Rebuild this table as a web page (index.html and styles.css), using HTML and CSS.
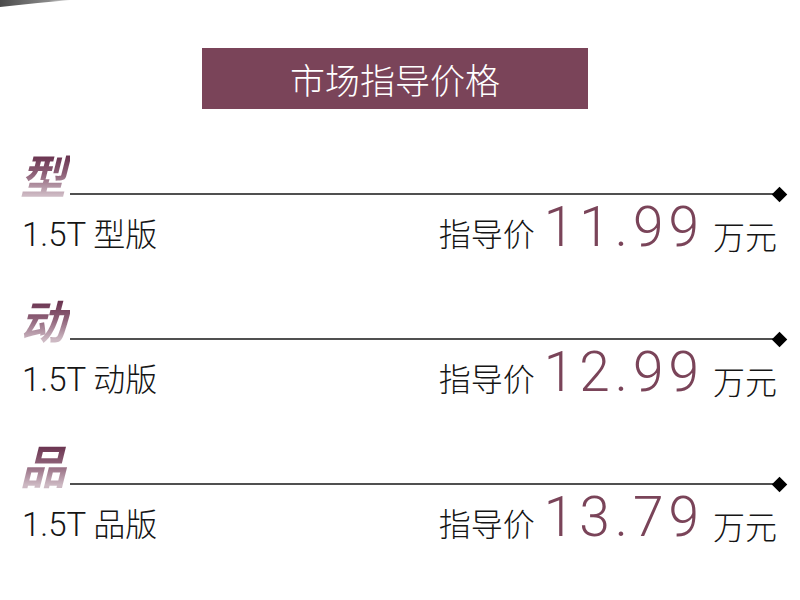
FILE: index.html
```html
<!DOCTYPE html>
<html lang="zh">
<head>
<meta charset="utf-8">
<link rel="stylesheet" href="styles.css">
</head>
<body>
<svg class="corner" width="80" height="10" viewBox="0 0 80 10">
  <defs>
    <linearGradient id="cg" x1="0" y1="0" x2="1" y2="0">
      <stop offset="0" stop-color="#4a4a4a"/>
      <stop offset="0.7" stop-color="#8a8a8a"/>
      <stop offset="1" stop-color="#e0e0e0"/>
    </linearGradient>
  </defs>
  <path d="M0 0 L70 0 Q35 3 0 7 Z" fill="url(#cg)"/>
</svg>
<div class="page">
  <div class="banner">市场指导价格</div>

  <div class="section">
    <div class="head"><span class="big">型</span><span class="rule"></span><span class="diamond"></span></div>
    <div class="row">
      <span class="name"><span class="lat">1.5T</span> 型版</span>
      <span class="price">指导价 <span class="num">11.99</span> <span class="unit">万元</span></span>
    </div>
  </div>

  <div class="section">
    <div class="head"><span class="big">动</span><span class="rule"></span><span class="diamond"></span></div>
    <div class="row">
      <span class="name"><span class="lat">1.5T</span> 动版</span>
      <span class="price">指导价 <span class="num">12.99</span> <span class="unit">万元</span></span>
    </div>
  </div>

  <div class="section">
    <div class="head"><span class="big">品</span><span class="rule"></span><span class="diamond"></span></div>
    <div class="row">
      <span class="name"><span class="lat">1.5T</span> 品版</span>
      <span class="price">指导价 <span class="num">13.79</span> <span class="unit">万元</span></span>
    </div>
  </div>
</div>
</body>
</html>
```
FILE: styles.css
```css
html, body {
  margin: 0;
  padding: 0;
  background: #ffffff;
}
body {
  width: 800px;
  height: 600px;
  overflow: hidden;
  position: relative;
  font-family: Roboto, "Liberation Sans", "Noto Sans CJK SC", sans-serif;
  color: #151515;
}
.corner {
  position: absolute;
  left: 0;
  top: 0;
}
.page {
  padding-top: 48px;
}
.banner {
  margin-left: 202px;
  width: 386px;
  height: 61px;
  background: #7a4459;
  color: #ffffff;
  font-family: "Noto Sans CJK SC", sans-serif;
  font-size: 35px;
  font-weight: 300;
  line-height: 61px;
  text-align: center;
}
.section {
  height: 145px;
  padding-left: 20px;
  padding-right: 23px;
  box-sizing: border-box;
}
.banner + .section {
  margin-top: 40px;
}
.head {
  display: flex;
  align-items: center;
  height: 50px;
}
.big {
  font-family: "Noto Sans CJK SC", sans-serif;
  font-size: 46px;
  line-height: 50px;
  font-weight: 700;
  font-style: italic;
  background: linear-gradient(180deg, #6a3450 15%, #8e6178 50%, #cdb9c3 92%);
  -webkit-background-clip: text;
  background-clip: text;
  color: transparent;
  width: 50px;
  align-self: flex-start;
}
.rule {
  flex: 1;
  height: 1.5px;
  background: #505050;
  margin-top: 40px;
}
.diamond {
  width: 11px;
  height: 11px;
  background: #000;
  transform: rotate(45deg);
  margin-top: 40px;
  margin-left: -3px;
  margin-right: -8px;
}
.row {
  display: flex;
  justify-content: space-between;
  align-items: baseline;
  padding-left: 2px;
  margin-top: -4px;
}
.name {
  font-family: "Noto Sans CJK SC", sans-serif;
  font-size: 32px;
  font-weight: 300;
}
.lat {
  font-family: Roboto, "Liberation Sans", sans-serif;
  font-weight: 300;
  font-size: 33px;
}
.price {
  font-family: "Noto Sans CJK SC", sans-serif;
  font-size: 32px;
  font-weight: 300;
  word-spacing: 2px;
}
.num {
  font-family: Roboto, "Liberation Sans", sans-serif;
  font-weight: 300;
  font-size: 55px;
  letter-spacing: 5px;
  color: #7a4459;
}
.unit {
  position: relative;
  top: 3px;
}
```
